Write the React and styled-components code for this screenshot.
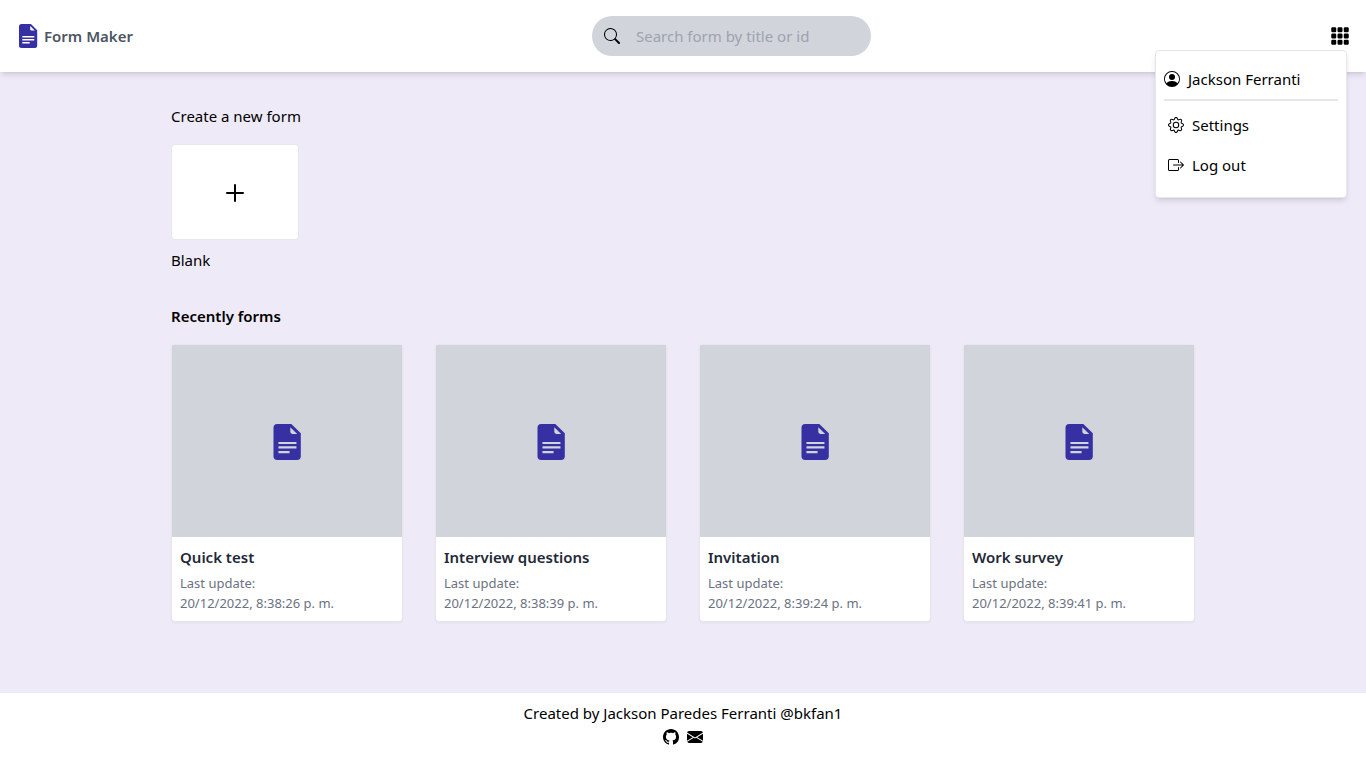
import React from "react";
import styled, { createGlobalStyle } from "styled-components";
import {
  BsSearch,
  BsGrid3X3GapFill,
  BsPersonCircle,
  BsGear,
  BsBoxArrowRight,
  BsGithub,
  BsFillEnvelopeFill,
} from "react-icons/bs";

const GlobalStyle = createGlobalStyle`
  *, *::before, *::after { box-sizing: border-box; }
  body {
    margin: 0;
    font-family: "Noto Sans", "Open Sans", sans-serif;
    font-size: 15px;
    line-height: 24px;
    color: #000;
  }
  h1, h2, h3, p, ul { margin: 0; padding: 0; font-size: inherit; }
  ul { list-style: none; }
  button, input { font: inherit; color: inherit; }
  a { color: inherit; text-decoration: none; }
  svg { display: block; flex-shrink: 0; }
`;

const Page = styled.div`
  display: flex;
  flex-direction: column;
  min-height: 100vh;
  background: #eeeaf8;
`;

const Header = styled.header`
  display: flex;
  align-items: center;
  justify-content: space-between;
  padding: 16px;
  background: #fff;
  box-shadow: 0 4px 6px -1px rgba(0, 0, 0, 0.1), 0 2px 4px -2px rgba(0, 0, 0, 0.1);
  position: relative;
`;

const Brand = styled.a`
  display: flex;
  align-items: center;
  gap: 4px;
  color: #4b5563;
  font-weight: 600;
`;

const SearchBox = styled.label`
  display: flex;
  align-items: center;
  width: 279px;
  height: 40px;
  padding: 0 12px;
  gap: 16px;
  border-radius: 20px;
  background: #d1d5db;
`;

const SearchInput = styled.input`
  flex: 1;
  min-width: 0;
  padding: 0;
  border: 0;
  outline: 0;
  background: transparent;
  &::placeholder {
    color: #9ca3af;
    opacity: 1;
  }
`;

const MenuAnchor = styled.div`
  position: relative;
`;

const IconButton = styled.button`
  display: block;
  padding: 0;
  border: 0;
  background: transparent;
  cursor: pointer;
`;

const Menu = styled.div`
  position: absolute;
  top: 24px;
  right: 3px;
  z-index: 1;
  width: 192px;
  padding: 8px;
  border: 1px solid #e5e7eb;
  border-radius: 4px;
  background: #fff;
  box-shadow: 0 4px 6px -1px rgba(0, 0, 0, 0.1), 0 2px 4px -2px rgba(0, 0, 0, 0.1);
`;

const MenuUser = styled.a`
  display: flex;
  align-items: center;
  gap: 8px;
  padding: 8px 0;
  border-bottom: 2px solid #e5e7eb;
`;

const MenuList = styled.ul`
  && { padding: 4px; }
`;

const MenuItem = styled.button`
  display: flex;
  align-items: center;
  gap: 8px;
  width: 100%;
  padding: 8px 0;
  border: 0;
  background: transparent;
  cursor: pointer;
`;

const Main = styled.main`
  flex: 1;
  display: flex;
  flex-direction: column;
  gap: 32px;
  width: 100%;
  max-width: 1024px;
  margin: 0 auto;
  padding: 32px 0;
`;

const Section = styled.section`
  display: flex;
  flex-direction: column;
  gap: 16px;
`;

const SectionTitle = styled.h2`
  font-weight: ${(p) => (p.$strong ? 600 : 400)};
`;

const BlankForm = styled.div`
  display: flex;
  flex-direction: column;
  gap: 8px;
`;

const BlankButton = styled.button`
  display: flex;
  align-items: center;
  justify-content: center;
  width: 128px;
  height: 96px;
  padding: 2px 0 0;
  border: 1px solid #e5e7eb;
  border-radius: 4px;
  background: #fff;
  cursor: pointer;
`;

const CardGrid = styled.ul`
  display: grid;
  grid-template-columns: repeat(auto-fill, minmax(224px, 1fr));
  gap: 32px;
`;

const Card = styled.a`
  display: block;
  border: 1px solid #e5e7eb;
  border-radius: 4px;
  background: #fff;
  box-shadow: 0 1px 2px rgba(0, 0, 0, 0.05);
`;

const CardPreview = styled.div`
  display: flex;
  align-items: center;
  justify-content: center;
  height: 192px;
  padding-top: 2px;
  background: #d1d5db;
`;

const CardBody = styled.div`
  display: flex;
  flex-direction: column;
  gap: 4px;
  padding: 8px;
`;

const CardTitle = styled.h3`
  color: #1f2937;
  font-weight: 600;
`;

const CardDate = styled.p`
  color: #6b7280;
  font-size: 13px;
  line-height: 20px;
`;

const Footer = styled.footer`
  display: flex;
  flex-direction: column;
  align-items: center;
  padding: 8px;
  background: #fff;
`;

const FooterLinks = styled.div`
  display: flex;
  align-items: center;
  gap: 8px;
  height: 24px;
`;

function DocumentIcon({ size }) {
  return (
    <svg width={size} height={size} viewBox="0 0 24 24" fill="#3730a3" aria-hidden="true">
      <path
        fillRule="evenodd"
        d="M5.5 0H14.9L21.2 6.2V21.5A2.5 2.5 0 0 1 18.7 24H5.5A2.5 2.5 0 0 1 3 21.5V2.5A2.5 2.5 0 0 1 5.5 0ZM14.2 2.1V5.2A1.4 1.4 0 0 0 15.6 6.6H18.8ZM6.3 12V13.4H18.3V12ZM6.3 14.9V16.4H18.3V14.9ZM6.3 18V19.5H13.7V18Z"
      />
    </svg>
  );
}

function PlusIcon() {
  return (
    <svg width="24" height="24" viewBox="0 0 24 24" stroke="#000" strokeWidth="2" aria-hidden="true">
      <path strokeLinecap="round" d="M12 4V20M4 12H20" />
    </svg>
  );
}

const forms = [
  { title: "Quick test", date: "20/12/2022, 8:38:26 p. m." },
  { title: "Interview questions", date: "20/12/2022, 8:38:39 p. m." },
  { title: "Invitation", date: "20/12/2022, 8:39:24 p. m." },
  { title: "Work survey", date: "20/12/2022, 8:39:41 p. m." },
];

export default function App() {
  return (
    <Page>
      <GlobalStyle />
      <Header>
        <Brand href="#">
          <DocumentIcon size={24} />
          Form Maker
        </Brand>
        <SearchBox>
          <BsSearch size={16} />
          <SearchInput type="text" placeholder="Search form by title or id" aria-label="Search form by title or id" />
        </SearchBox>
        <MenuAnchor>
          <IconButton type="button" aria-label="Menu" aria-expanded="true">
            <BsGrid3X3GapFill size={20} />
          </IconButton>
          <Menu>
            <MenuUser href="#">
              <BsPersonCircle size={16} />
              Jackson Ferranti
            </MenuUser>
            <MenuList>
              <li>
                <MenuItem type="button">
                  <BsGear size={16} />
                  Settings
                </MenuItem>
              </li>
              <li>
                <MenuItem type="button">
                  <BsBoxArrowRight size={16} />
                  Log out
                </MenuItem>
              </li>
            </MenuList>
          </Menu>
        </MenuAnchor>
      </Header>
      <Main>
        <Section>
          <SectionTitle>Create a new form</SectionTitle>
          <BlankForm>
            <BlankButton type="button" aria-label="Create a blank form">
              <PlusIcon />
            </BlankButton>
            <p>Blank</p>
          </BlankForm>
        </Section>
        <Section>
          <SectionTitle $strong>Recently forms</SectionTitle>
          <CardGrid>
            {forms.map((form) => (
              <li key={form.title}>
                <Card href="#">
                  <CardPreview>
                    <DocumentIcon size={36} />
                  </CardPreview>
                  <CardBody>
                    <CardTitle>{form.title}</CardTitle>
                    <CardDate>
                      Last update:
                      <br />
                      {form.date}
                    </CardDate>
                  </CardBody>
                </Card>
              </li>
            ))}
          </CardGrid>
        </Section>
      </Main>
      <Footer>
        <p>Created by Jackson Paredes Ferranti @bkfan1</p>
        <FooterLinks>
          <a href="#" aria-label="GitHub">
            <BsGithub size={16} />
          </a>
          <a href="#" aria-label="Email">
            <BsFillEnvelopeFill size={16} />
          </a>
        </FooterLinks>
      </Footer>
    </Page>
  );
}
